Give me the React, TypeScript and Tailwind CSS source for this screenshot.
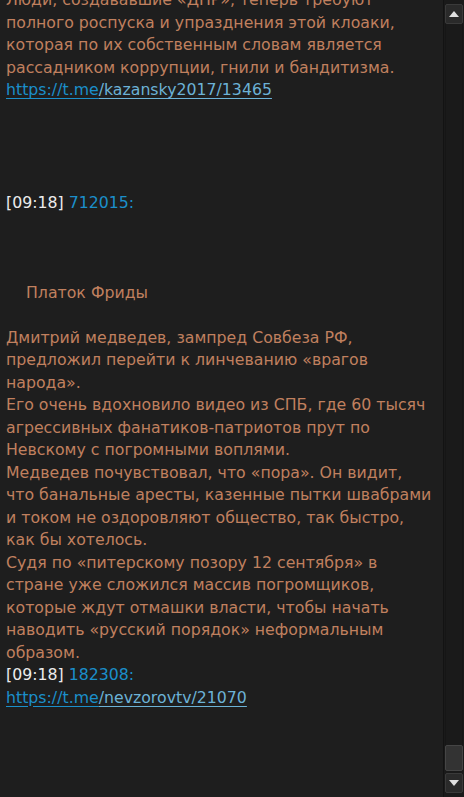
import React from 'react';

type Line =
  | { kind: 'text'; text: string; indent?: boolean }
  | { kind: 'blank' }
  | { kind: 'stamp'; time: string; user: string }
  | { kind: 'link'; base: string; path: string };

const lines: Line[] = [
  { kind: 'text', text: 'Люди, создававшие «ДНР», теперь требуют' },
  { kind: 'text', text: 'полного роспуска и упразднения этой клоаки,' },
  { kind: 'text', text: 'которая по их собственным словам является' },
  { kind: 'text', text: 'рассадником коррупции, гнили и бандитизма.' },
  { kind: 'link', base: 'https://t.me', path: '/kazansky2017/13465' },
  { kind: 'blank' },
  { kind: 'blank' },
  { kind: 'blank' },
  { kind: 'blank' },
  { kind: 'stamp', time: '[09:18]', user: '712015:' },
  { kind: 'blank' },
  { kind: 'blank' },
  { kind: 'blank' },
  { kind: 'text', text: 'Платок Фриды', indent: true },
  { kind: 'blank' },
  { kind: 'text', text: 'Дмитрий медведев, зампред Совбеза РФ,' },
  { kind: 'text', text: 'предложил перейти к линчеванию «врагов' },
  { kind: 'text', text: 'народа».' },
  { kind: 'text', text: 'Его очень вдохновило видео из СПБ, где 60 тысяч' },
  { kind: 'text', text: 'агрессивных фанатиков-патриотов прут по' },
  { kind: 'text', text: 'Невскому с погромными воплями.' },
  { kind: 'text', text: 'Медведев почувствовал, что «пора». Он видит,' },
  { kind: 'text', text: 'что банальные аресты, казенные пытки швабрами' },
  { kind: 'text', text: 'и током не оздоровляют общество, так быстро,' },
  { kind: 'text', text: 'как бы хотелось.' },
  { kind: 'text', text: 'Судя по «питерскому позору 12 сентября» в' },
  { kind: 'text', text: 'стране уже сложился массив погромщиков,' },
  { kind: 'text', text: 'которые ждут отмашки власти, чтобы начать' },
  { kind: 'text', text: 'наводить «русский порядок» неформальным' },
  { kind: 'text', text: 'образом.' },
  { kind: 'stamp', time: '[09:18]', user: '182308:' },
  { kind: 'link', base: 'https://t.me', path: '/nevzorovtv/21070' },
];

function ChatLine({ line }: { line: Line }) {
  if (line.kind === 'blank') return <div className="h-[22.5px]" />;
  if (line.kind === 'stamp') {
    return (
      <div className="whitespace-nowrap">
        <span className="text-[#ececec]">{line.time}</span>{' '}
        <span className="text-[#1b8fca]">{line.user}</span>
      </div>
    );
  }
  if (line.kind === 'link') {
    return (
      <div className="whitespace-nowrap">
        <span className="text-[#1b8fca] underline underline-offset-[3px]">{line.base}</span>
        <span className="text-[#6cb2d6] underline underline-offset-[3px]">{line.path}</span>
      </div>
    );
  }
  return (
    <div className={line.indent ? 'whitespace-nowrap pl-[20px]' : 'whitespace-nowrap'}>
      {line.text}
    </div>
  );
}

export default function App() {
  return (
    <div className="flex h-[797px] w-[464px] overflow-hidden bg-[#1e1e1e]">
      {/* Chat log */}
      <div
        className="flex-1 overflow-hidden pl-[6px] text-[15.75px] leading-[22.5px] text-[#c0805f]"
        style={{ fontFamily: '"DejaVu Sans", sans-serif' }}
      >
        <div className="-mt-[11px]">
          {lines.map((line, i) => (
            <ChatLine key={i} line={line} />
          ))}
        </div>
      </div>

      {/* Scrollbar */}
      <div className="flex w-[21px] flex-col border-l border-[#131313] bg-[#1a1a1a] px-[1px] py-[4px]">
        <div className="flex h-[20px] items-center justify-center rounded-[2px] border border-[#3a3a3a] bg-[#2a2a2a]">
          <svg width="10" height="6" viewBox="0 0 10 6">
            <path d="M5 0 L10 6 L0 6 Z" fill="#e0e0e0" />
          </svg>
        </div>
        <div className="flex-1 border-x border-[#161616]" />
        <div className="mb-[2px] h-[26px] rounded-[2px] border border-[#454545] bg-[#333333]" />
        <div className="flex h-[20px] items-center justify-center rounded-[2px] border border-[#3a3a3a] bg-[#2a2a2a]">
          <svg width="10" height="6" viewBox="0 0 10 6">
            <path d="M0 0 L10 0 L5 6 Z" fill="#e0e0e0" />
          </svg>
        </div>
      </div>
    </div>
  );
}
